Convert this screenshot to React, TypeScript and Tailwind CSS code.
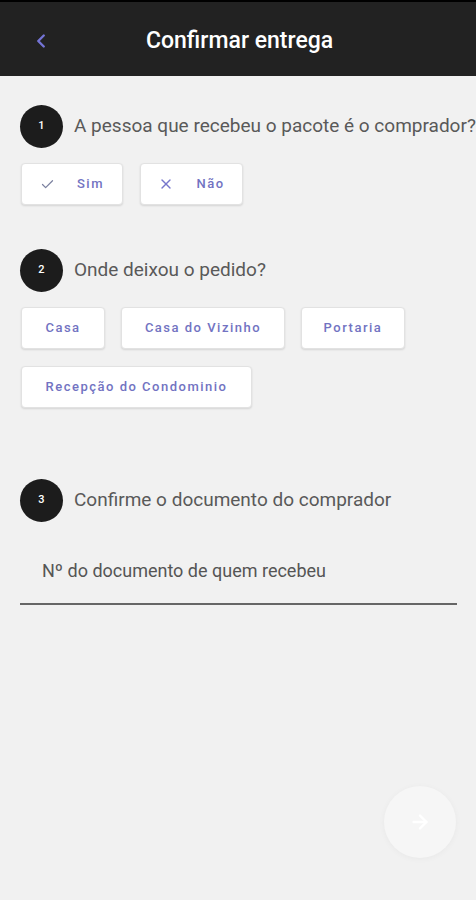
import { Check, X, ArrowRight, ChevronLeft } from 'lucide-react';

const font = { fontFamily: 'Roboto, "Liberation Sans", sans-serif' };

function Step({ n, label }: { n: number; label: string }) {
  return (
    <div className="flex items-center gap-[11px]">
      <div className="flex h-[43px] w-[43px] shrink-0 items-center justify-center rounded-full bg-[#1c1c1c] text-[11px] font-medium text-white">
        {n}
      </div>
      <span className="whitespace-nowrap text-[19px] text-[#595959]">{label}</span>
    </div>
  );
}

function Option({ label, w, icon }: { label: string; w: string; icon?: React.ReactNode }) {
  return (
    <button
      className={`flex h-[42px] ${w} items-center justify-center gap-[22px] rounded-[4px] border border-[#e2e2e2] bg-white text-[13px] font-medium tracking-[1.5px] text-[#7273c2] shadow-[0_1px_2px_rgba(0,0,0,0.12)]`}
    >
      {icon}
      {label}
    </button>
  );
}

export default function App() {
  return (
    <div className="relative min-h-screen w-full overflow-hidden bg-[#f1f1f1]" style={font}>
      {/* header */}
      <header className="flex h-[76px] items-center border-t-2 border-black bg-[#222222] px-[30px] pt-[4px]">
        <ChevronLeft className="h-[22px] w-[22px] text-[#7474d6]" strokeWidth={2.6} />
        <h1 className="ml-[94px] text-[23px] font-medium text-white">Confirmar entrega</h1>
      </header>

      <main className="flex flex-col pl-[20px] pr-[19px] pt-[29px]">
        <Step n={1} label="A pessoa que recebeu o pacote é o comprador?" />
        <div className="ml-[1px] mt-[15px] flex gap-[17px]">
          <Option label="Sim" w="w-[102px]" icon={<Check className="h-[15px] w-[15px] text-[#7c82a0]" strokeWidth={2} />} />
          <Option label="Não" w="w-[103px]" icon={<X className="h-[16px] w-[16px] text-[#7676cc]" strokeWidth={2} />} />
        </div>

        <div className="mt-[44px]">
          <Step n={2} label="Onde deixou o pedido?" />
        </div>
        <div className="ml-[1px] mt-[15px] flex flex-wrap gap-x-[16px] gap-y-[17px]">
          <Option label="Casa" w="w-[84px]" />
          <Option label="Casa do Vizinho" w="w-[164px]" />
          <Option label="Portaria" w="w-[104px]" />
          <Option label="Recepção do Condominio" w="w-[231px]" />
        </div>

        <div className="mt-[71px]">
          <Step n={3} label="Confirme o documento do comprador" />
        </div>
        <div className="mt-[35px] border-b-2 border-[#666666] pb-[19px] pl-[22px]">
          <span className="text-[18px] text-[#555555]">Nº do documento de quem recebeu</span>
        </div>
      </main>

      {/* fab */}
      <button className="absolute left-[384px] top-[786px] flex h-[72px] w-[72px] items-center justify-center rounded-full bg-[#f6f6f6] shadow-[0_1px_6px_rgba(0,0,0,0.04)]">
        <ArrowRight className="h-[22px] w-[22px] text-white" strokeWidth={2.6} />
      </button>
    </div>
  );
}
